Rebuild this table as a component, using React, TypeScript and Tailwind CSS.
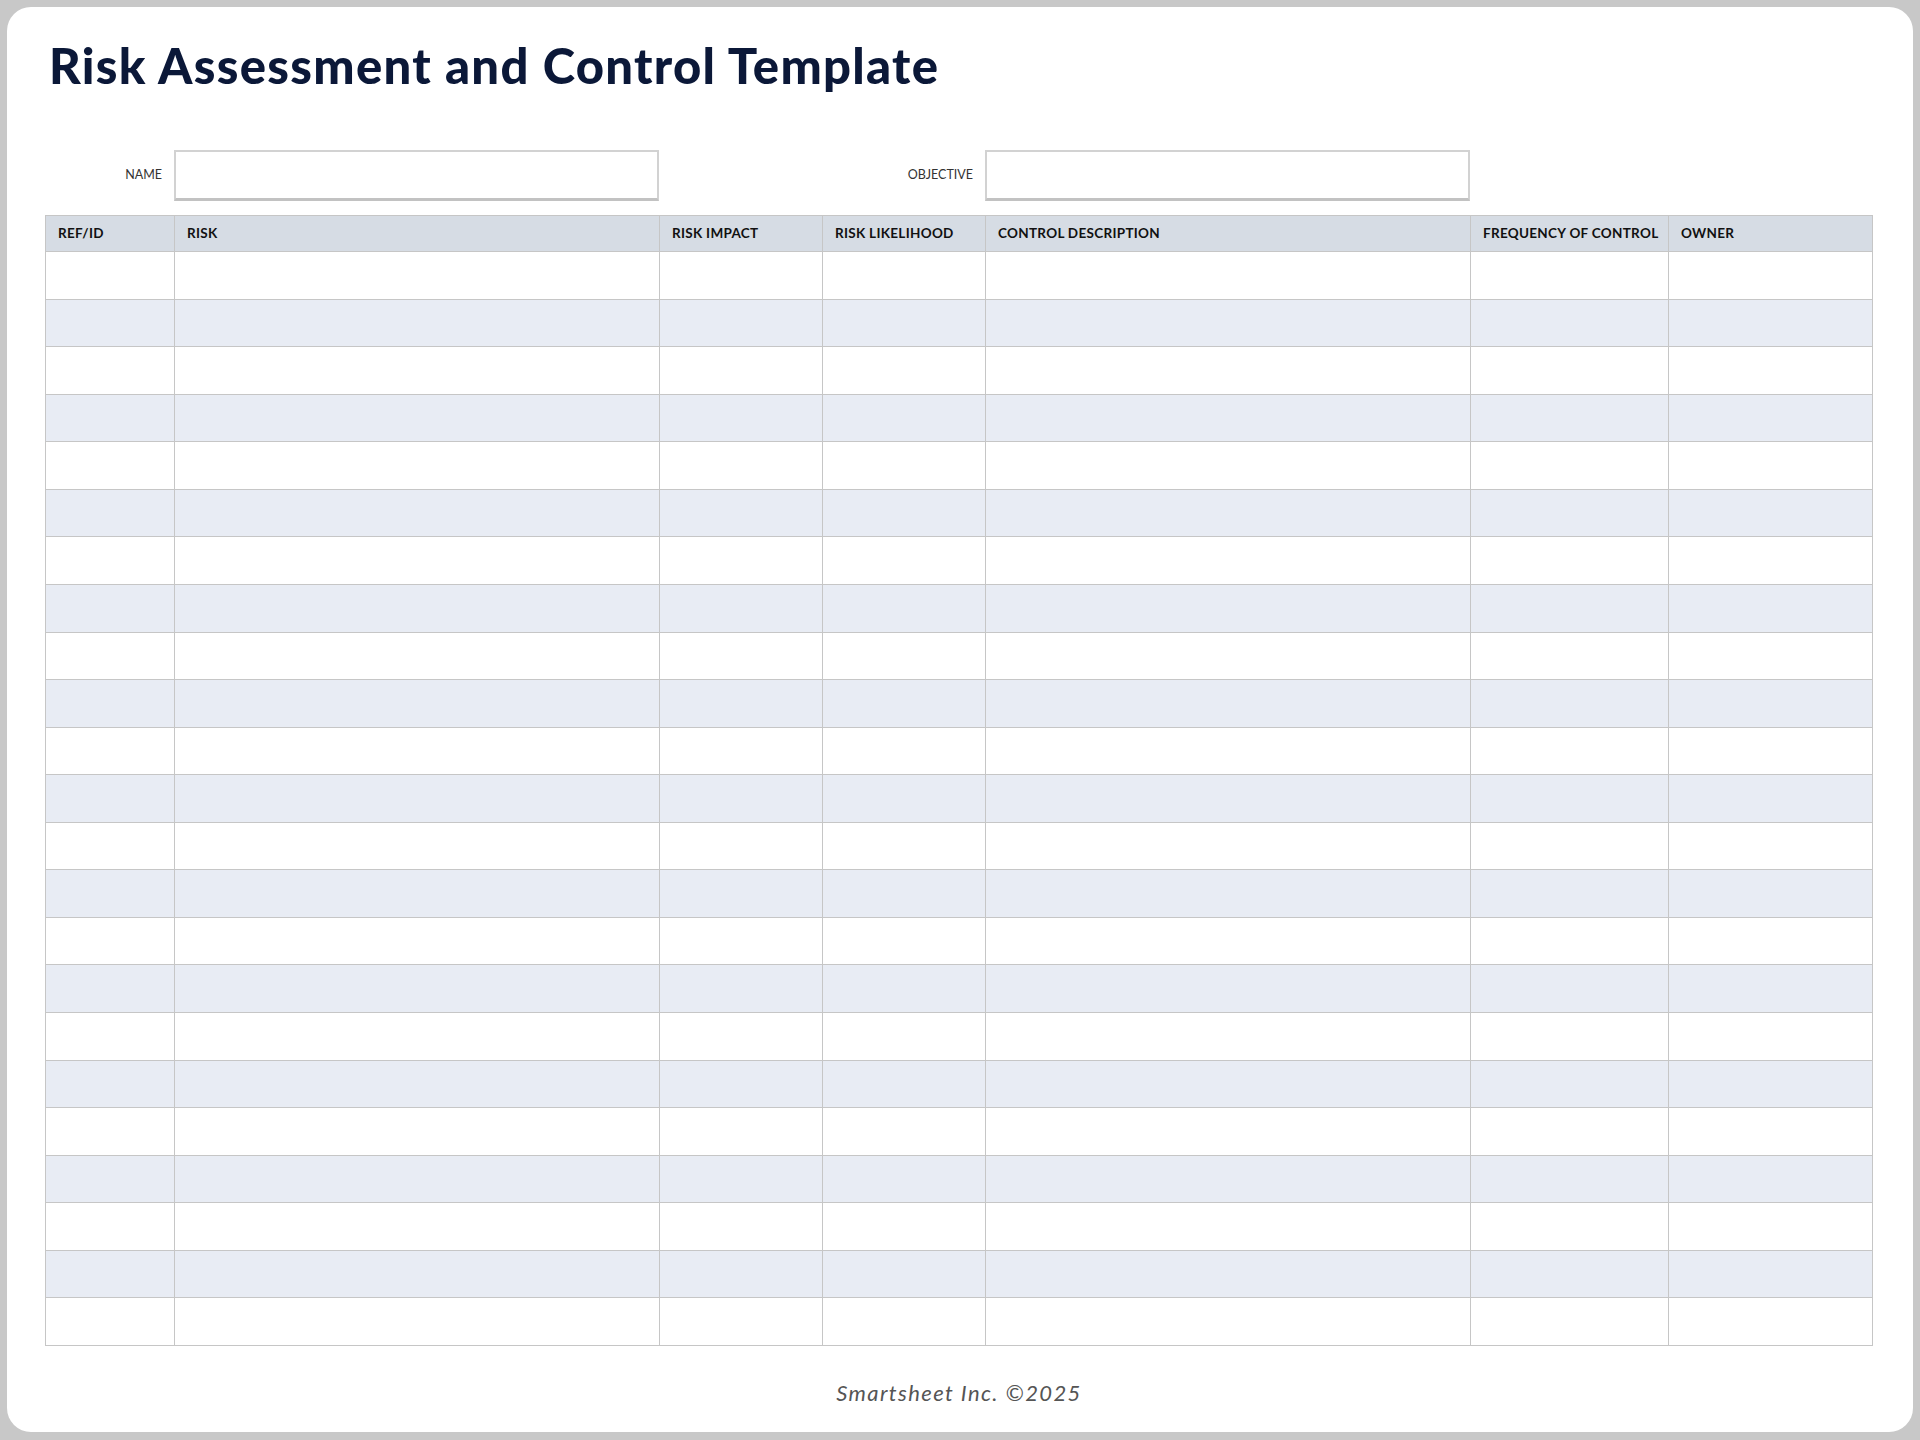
const columns = [
  { label: "REF/ID", width: "w-[129px]" },
  { label: "RISK", width: "w-[485px]" },
  { label: "RISK IMPACT", width: "w-[163px]" },
  { label: "RISK LIKELIHOOD", width: "w-[163px]" },
  { label: "CONTROL DESCRIPTION", width: "w-[485px]" },
  { label: "FREQUENCY OF CONTROL", width: "w-[198px]" },
  { label: "OWNER", width: "flex-1" },
];

const ROW_COUNT = 23;

function FieldBox() {
  return (
    <div className="h-[51px] w-[485px] border-2 border-b-[3px] border-[#d2d2d2] border-b-[#c2c2c2] bg-white" />
  );
}

export default function App() {
  const rows = Array.from({ length: ROW_COUNT }, (_, i) => i);

  return (
    <div className="h-[1440px] w-[1920px] bg-[#c8c8c8] pt-[7px] pl-[7px] pr-[7px] pb-[8px] font-['Lato','Open_Sans',sans-serif]">
      <div className="flex h-full flex-col rounded-[24px] bg-white pl-[38px] pr-[40px]">
        {/* Title */}
        <h1 className="mt-[34px] pl-[4px] text-[49px] leading-[49px] font-black tracking-[1.3px] text-[#0b1838]">
          Risk Assessment and Control Template
        </h1>

        {/* Name / Objective */}
        <div className="mt-[60px] flex h-[51px] items-center">
          <div className="w-[129px] pr-[12px] text-right text-[12.5px] text-[#333]">NAME</div>
          <FieldBox />
          <div className="w-[326px] pr-[12px] text-right text-[12.5px] text-[#333]">OBJECTIVE</div>
          <FieldBox />
        </div>

        {/* Table */}
        <div className="mt-[14px] border-t border-l border-[#c6c6c6]">
          <div className="flex h-[36px] bg-[#d6dce4]">
            {columns.map((col) => (
              <div
                key={col.label}
                className={`${col.width} flex items-center border-r border-b border-[#c6c6c6] pl-[12px] text-[13.5px] font-bold tracking-[0.3px] text-[#111]`}
              >
                {col.label}
              </div>
            ))}
          </div>
          {rows.map((r) => (
            <div key={r} className={`flex h-[47.57px] ${r % 2 === 1 ? "bg-[#e8ecf4]" : "bg-white"}`}>
              {columns.map((col) => (
                <div key={col.label} className={`${col.width} border-r border-b border-[#c6c6c6]`} />
              ))}
            </div>
          ))}
        </div>

        {/* Footer */}
        <div className="mt-[33px] text-center text-[22px] leading-[28px] italic tracking-[1.4px] text-[#555]">
          Smartsheet Inc. ©2025
        </div>
      </div>
    </div>
  );
}
